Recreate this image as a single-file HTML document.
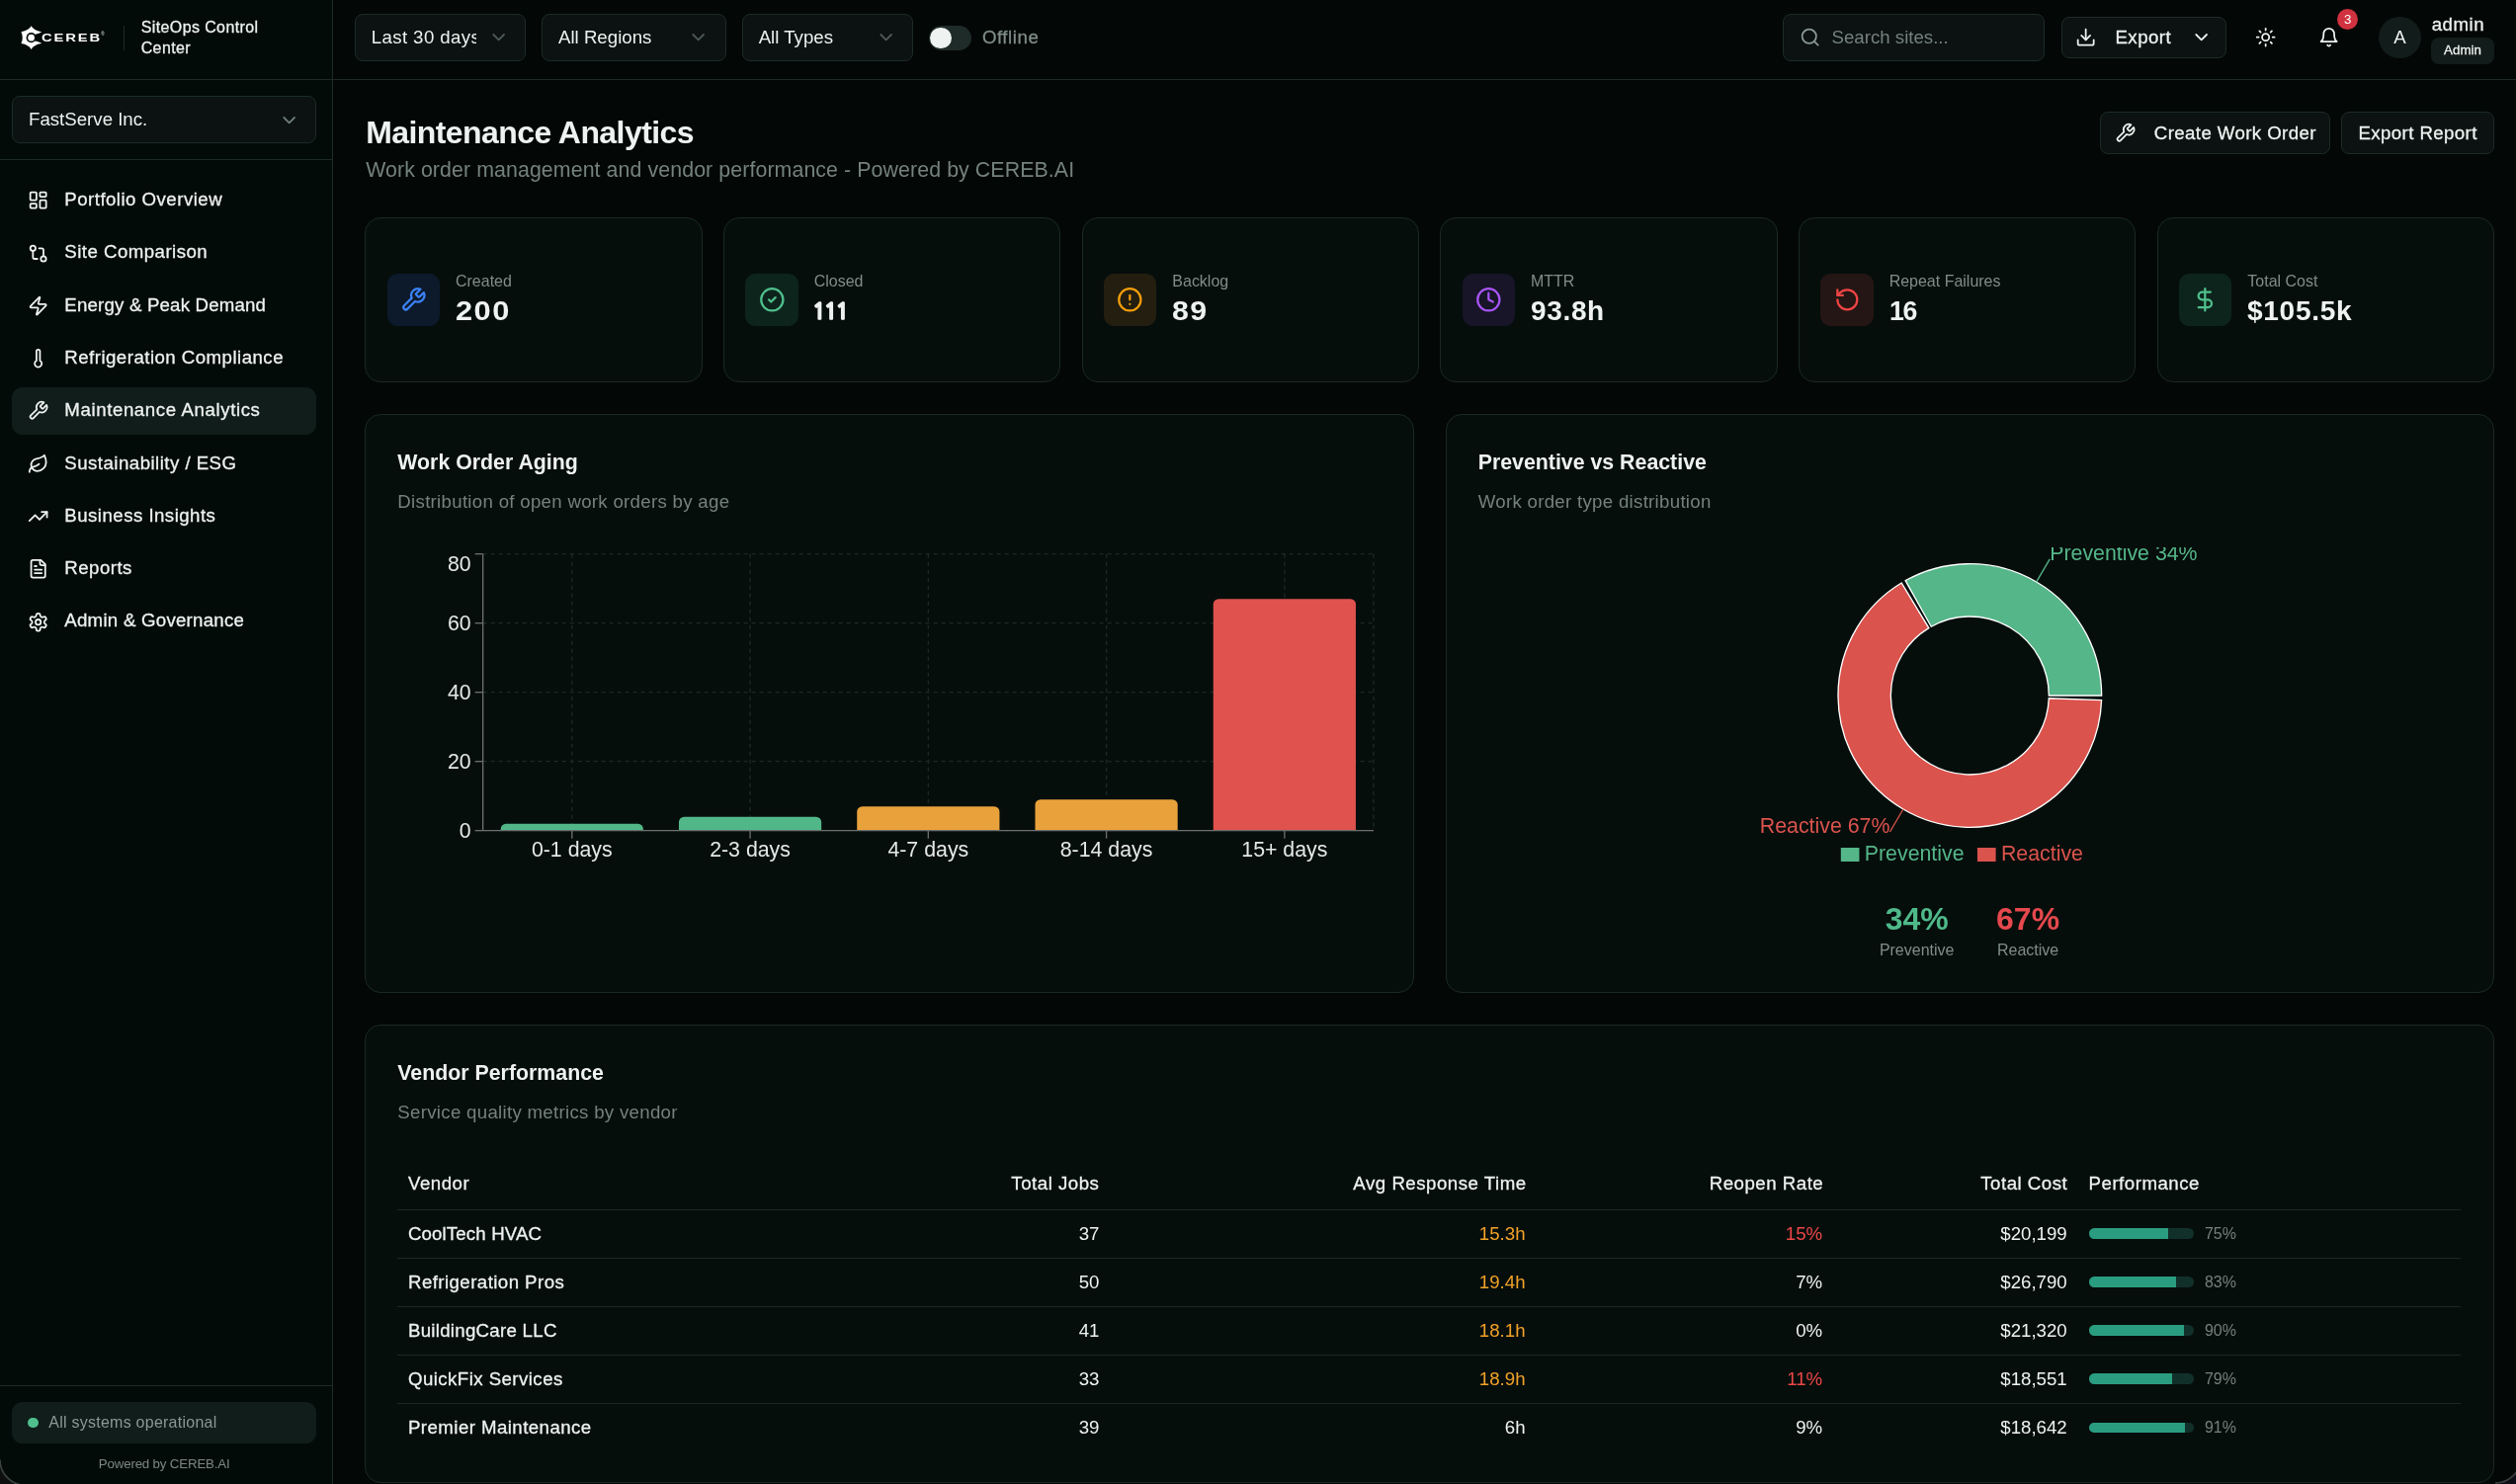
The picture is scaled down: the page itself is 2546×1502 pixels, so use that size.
<!DOCTYPE html>
<html lang="en">
<head>
<meta charset="utf-8">
<title>SiteOps Control Center - Maintenance Analytics</title>
<style>
*{box-sizing:border-box;margin:0;padding:0}
html,body{width:2546px;height:1502px;overflow:hidden;background:#030706}
body{font-family:"Liberation Sans",sans-serif;color:#eef2f0;-webkit-font-smoothing:antialiased}
#zoom{zoom:1.3333333;position:absolute;left:0;top:0;will-change:transform}
#app{position:absolute;left:-3px;top:-3px;width:1920px;height:1134px;background:#030706;font-size:14px}
svg.ic{fill:none;stroke:currentColor;stroke-width:2;stroke-linecap:round;stroke-linejoin:round;display:block;flex:none}
/* sidebar */
.sidebar{position:absolute;left:0;top:0;width:256px;height:1134px;background:#030b09;border-right:1px solid #1d2b28}
.brand{height:64px;border-bottom:1px solid #1d2b28;position:relative}
.brand .vline{position:absolute;left:96.5px;top:22.7px;width:1px;height:18.5px;background:#1d2b28}
.brand .appname{position:absolute;left:110px;top:15.5px;font-size:12px;line-height:16px;font-weight:500;color:#eef2f0;width:120px;letter-spacing:.3px}
.org{height:60.5px;border-bottom:1px solid #1d2b28;padding:12px}
.sel{height:36px;border:1px solid #1d2b28;border-radius:6px;background:#0b1211;display:flex;align-items:center;justify-content:space-between;padding:0 12px;font-size:14px;color:#eef2f0;white-space:nowrap}
.sel svg{width:16px;height:16px;color:#6f7d79}
.nav{padding:12.7px 12px 12px}
.nav a{display:flex;align-items:center;gap:12px;height:36px;padding:0 12px 1.4px;border-radius:8px;font-size:14px;font-weight:500;color:#eef2f0;margin-bottom:4px;text-decoration:none;white-space:nowrap;letter-spacing:.35px}
.nav a.on{background:#101d1a}
.nav a svg{width:16px;height:16px;position:relative;top:.7px}
.sfoot{position:absolute;left:0;right:0;bottom:0;height:79.6px;border-top:1px solid #1d2b28;padding:11.8px 12px 12px}
.status{height:32px;border-radius:8px;background:#101d1a;display:flex;align-items:center;gap:8px;padding:0 12px;font-size:12px;color:#8b9894;letter-spacing:.19px}
.status i{width:8px;height:8px;border-radius:50%;background:#4fc08d;display:block}
.pw{margin-top:7.8px;text-align:center;font-size:10px;line-height:15px;color:#7b8784;letter-spacing:-.14px}
/* topbar */
.topbar{position:absolute;left:256px;top:0;right:0;height:64px;border-bottom:1px solid #1d2b28;background:#030706}
.topbar .abs{position:absolute}
.tsel{position:absolute;top:13.5px}
.switch{position:absolute;left:452px;top:22.5px;width:32px;height:18.4px;border-radius:10px;background:#1f2b29}
.switch i{position:absolute;left:1px;top:1.2px;width:16px;height:16px;border-radius:50%;background:#eef2f0;display:block}
.offl{position:absolute;left:492.4px;top:22px;font-size:14px;line-height:20px;color:#7f8c88;font-weight:500;letter-spacing:.42px}
.search{position:absolute;left:1099.9px;top:13.5px;width:199px;height:36px;border:1px solid #1d2b28;border-radius:6px;background:#0b1211;display:flex;align-items:center;padding-left:12px;color:#74817d;font-size:14px}
.search svg{width:16px;height:16px;margin-right:8.5px;color:#8b9894}
.btn{position:absolute;height:32px;border:1px solid #1d2b28;border-radius:6px;background:#0b1211;display:flex;align-items:center;font-size:14px;font-weight:500;color:#eef2f0;white-space:nowrap;letter-spacing:.3px}
.btn svg{width:16px;height:16px}
.ibtn{position:absolute;top:13.5px;width:36px;height:36px;display:flex;align-items:center;justify-content:center;color:#eef2f0}
.ibtn svg{width:16px;height:16px}
.badge3{position:absolute;left:24.3px;top:-3.7px;width:16px;height:16px;border-radius:50%;background:#d1323f;color:#fff;font-size:10px;line-height:16px;text-align:center}
.avatar{position:absolute;left:1552.4px;top:15.5px;width:32px;height:32px;border-radius:50%;background:#121c1a;display:flex;align-items:center;justify-content:center;font-size:14px;color:#eef2f0}
.uname{position:absolute;left:1592.5px;top:12.1px;font-size:14px;line-height:20px;font-weight:500;color:#eef2f0;letter-spacing:.4px}
.urole{position:absolute;left:1592px;top:31.6px;height:20.5px;width:48px;border-radius:6px;background:#121c1a;font-size:10px;line-height:20px;text-align:center;color:#eef2f0;font-weight:500}
/* main */
.main{position:absolute;left:256px;top:64px;right:0;bottom:0;padding:24px}
h1{font-size:24px;line-height:32px;font-weight:700;color:#eef2f0;white-space:nowrap;letter-spacing:-.42px}
.sub{font-size:16px;line-height:24px;color:#74817d;white-space:nowrap;letter-spacing:.07px}
.card{position:absolute;border:1px solid #1a2925;border-radius:12px;background:#060e0c}
.kpi .ibox{position:absolute;left:16px;top:41.9px;width:40px;height:39.9px;border-radius:8px;display:flex;align-items:center;justify-content:center}
.kpi .ibox svg{width:20px;height:20px}
.kpi .lb{position:absolute;left:68px;top:39.5px;font-size:12px;line-height:16px;color:#808d89;white-space:nowrap}
.kpi .vl{position:absolute;left:68px;top:56.4px;font-size:21px;line-height:28px;font-weight:700;color:#eef2f0;white-space:nowrap}
.ct{position:absolute;left:24px;top:24px;font-size:16px;line-height:24px;font-weight:700;color:#eef2f0;white-space:nowrap}
.cd{position:absolute;left:24px;top:56.3px;font-size:14px;line-height:20px;color:#74817d;white-space:nowrap;letter-spacing:.22px}
table{position:absolute;left:24px;top:99.6px;border-collapse:collapse;table-layout:fixed;width:1566px;font-size:14px}
th{height:40px;font-weight:500;color:#eef2f0;text-align:right;padding:1.3px 8px 0;white-space:nowrap;letter-spacing:.38px}
td{height:36.75px;text-align:right;padding:0 8px;border-top:1px solid #1a2925;color:#eef2f0;white-space:nowrap}
th.l,td.l{text-align:left}
td.v{font-weight:500;letter-spacing:.33px}
.or{color:#f2a228}.rd{color:#ec4747}
td:nth-child(3),td:nth-child(4){padding-right:8.8px}td:nth-child(5){padding-right:8.4px}
.pb{display:flex;align-items:center;gap:8px}
.pb .tr{width:80px;height:8px;border-radius:4px;background:#12302a;overflow:hidden}
.pb .tr i{display:block;height:8px;background:#2a9d80}
.pb span{font-size:12px;color:#74817d}
.nav a,.btn,.uname,.urole,.offl,th,td.v,.brand .appname{-webkit-text-stroke:.22px currentColor}
</style>
</head>
<body>
<div id="zoom"><div id="app">
<aside class="sidebar">
  <div class="brand">
    <svg style="position:absolute;left:17px;top:21px;overflow:visible" width="68" height="21" viewBox="0 0 90.667 28">
      <g transform="translate(12.6,14.15) scale(0.955)">
        <path fill="#fff" d="M0,-12.4 Q2.6,-7.6 10.6,-6.2 L10.6,-5.6 L5,-2.6 L5,2.6 L10.6,5.6 L10.6,6.2 Q2.6,7.6 0,12.4 Q-2.6,7.6 -10.7,6.2 Q-7.8,0 -10.7,-6.2 Q-2.6,-7.6 0,-12.4Z"/>
        <circle r="5.3" fill="#030b09"/>
        <path fill="#030b09" d="M3.5,-3.2 L10.8,-5.4 L10.8,5.4 L3.5,3.2Z"/>
        <circle r="3.5" fill="#fff"/>
      </g>
      <text transform="translate(22.9,18.2) scale(1.3,1)" font-family="Liberation Sans, sans-serif" font-weight="700" font-size="11.4" fill="#fff" letter-spacing="1.45">CEREB</text>
      <text x="83.4" y="12" font-family="Liberation Sans, sans-serif" font-size="4.6" font-weight="700" fill="#c8c8c8">®</text>
    </svg>
    <div class="vline"></div>
    <div class="appname">SiteOps Control Center</div>
  </div>
  <div class="org"><div class="sel"><span>FastServe Inc.</span><svg class="ic" viewBox="0 0 24 24"><path d="m6 9 6 6 6-6"/></svg></div></div>
  <nav class="nav">
    <a><svg class="ic" viewBox="0 0 24 24"><rect x="3" y="3" width="7" height="9" rx="1"/><rect x="14" y="3" width="7" height="5" rx="1"/><rect x="14" y="12" width="7" height="9" rx="1"/><rect x="3" y="16" width="7" height="5" rx="1"/></svg>Portfolio Overview</a>
    <a><svg class="ic" viewBox="0 0 24 24"><circle cx="18" cy="18" r="3"/><circle cx="6" cy="6" r="3"/><path d="M13 6h3a2 2 0 0 1 2 2v7"/><path d="M11 18H8a2 2 0 0 1-2-2V9"/></svg>Site Comparison</a>
    <a style="letter-spacing:.14px"><svg class="ic" viewBox="0 0 24 24"><path d="M4 14a1 1 0 0 1-.78-1.63l9.9-10.2a.5.5 0 0 1 .86.46l-1.92 6.02A1 1 0 0 0 13 10h7a1 1 0 0 1 .78 1.63l-9.9 10.2a.5.5 0 0 1-.86-.46l1.92-6.02A1 1 0 0 0 11 14z"/></svg>Energy &amp; Peak Demand</a>
    <a><svg class="ic" viewBox="0 0 24 24"><path d="M14 4v10.54a4 4 0 1 1-4 0V4a2 2 0 0 1 4 0Z"/></svg>Refrigeration Compliance</a>
    <a class="on" style="letter-spacing:.45px"><svg class="ic" viewBox="0 0 24 24"><path d="M14.7 6.3a1 1 0 0 0 0 1.4l1.6 1.6a1 1 0 0 0 1.4 0l3.77-3.77a6 6 0 0 1-7.94 7.94l-6.91 6.91a2.12 2.12 0 0 1-3-3l6.91-6.91a6 6 0 0 1 7.94-7.94l-3.76 3.76z"/></svg>Maintenance Analytics</a>
    <a><svg class="ic" viewBox="0 0 24 24"><path d="M11 20A7 7 0 0 1 9.8 6.1C15.5 5 17 4.48 19 2c1 2 2 4.18 2 8 0 5.5-4.78 10-10 10Z"/><path d="M2 21c0-3 1.85-5.36 5.08-6C9.5 14.52 12 13 13 12"/></svg>Sustainability / ESG</a>
    <a><svg class="ic" viewBox="0 0 24 24"><polyline points="22 7 13.5 15.5 8.5 10.5 2 17"/><polyline points="16 7 22 7 22 13"/></svg>Business Insights</a>
    <a><svg class="ic" viewBox="0 0 24 24"><path d="M15 2H6a2 2 0 0 0-2 2v16a2 2 0 0 0 2 2h12a2 2 0 0 0 2-2V7Z"/><path d="M14 2v4a2 2 0 0 0 2 2h4"/><path d="M10 9H8"/><path d="M16 13H8"/><path d="M16 17H8"/></svg>Reports</a>
    <a style="letter-spacing:.19px"><svg class="ic" viewBox="0 0 24 24"><path d="M12.22 2h-.44a2 2 0 0 0-2 2v.18a2 2 0 0 1-1 1.73l-.43.25a2 2 0 0 1-2 0l-.15-.08a2 2 0 0 0-2.73.73l-.22.38a2 2 0 0 0 .73 2.73l.15.1a2 2 0 0 1 1 1.72v.51a2 2 0 0 1-1 1.74l-.15.09a2 2 0 0 0-.73 2.73l.22.38a2 2 0 0 0 2.73.73l.15-.08a2 2 0 0 1 2 0l.43.25a2 2 0 0 1 1 1.73V20a2 2 0 0 0 2 2h.44a2 2 0 0 0 2-2v-.18a2 2 0 0 1 1-1.73l.43-.25a2 2 0 0 1 2 0l.15.08a2 2 0 0 0 2.73-.73l.22-.39a2 2 0 0 0-.73-2.73l-.15-.08a2 2 0 0 1-1-1.74v-.5a2 2 0 0 1 1-1.74l.15-.09a2 2 0 0 0 .73-2.73l-.22-.38a2 2 0 0 0-2.73-.73l-.15.08a2 2 0 0 1-2 0l-.43-.25a2 2 0 0 1-1-1.73V4a2 2 0 0 0-2-2z"/><circle cx="12" cy="12" r="3"/></svg>Admin &amp; Governance</a>
  </nav>
  <div class="sfoot">
    <div class="status"><i></i><span>All systems operational</span></div>
    <div class="pw">Powered by CEREB.AI</div>
  </div>
</aside>

<header class="topbar">
  <div class="sel tsel" style="left:16px;width:130px"><span style="overflow:hidden;width:80px;letter-spacing:.3px">Last 30 days</span><svg class="ic" viewBox="0 0 24 24" style="color:#4e5a57"><path d="m6 9 6 6 6-6"/></svg></div>
  <div class="sel tsel" style="left:158px;width:140px"><span>All Regions</span><svg class="ic" viewBox="0 0 24 24" style="color:#4e5a57"><path d="m6 9 6 6 6-6"/></svg></div>
  <div class="sel tsel" style="left:310px;width:130px"><span>All Types</span><svg class="ic" viewBox="0 0 24 24" style="color:#4e5a57"><path d="m6 9 6 6 6-6"/></svg></div>
  <div class="switch"><i></i></div>
  <div class="offl">Offline</div>
  <div class="search"><svg class="ic" viewBox="0 0 24 24"><circle cx="11" cy="11" r="8"/><path d="m21 21-4.3-4.3"/></svg>Search sites...</div>
  <div class="btn" style="left:1311.6px;top:15.5px;width:125px;padding-left:10px;letter-spacing:.35px"><svg class="ic" viewBox="0 0 24 24"><path d="M21 15v4a2 2 0 0 1-2 2H5a2 2 0 0 1-2-2v-4"/><polyline points="7 10 12 15 17 10"/><line x1="12" y1="15" x2="12" y2="3"/></svg><span style="margin-left:14px">Export</span><svg class="ic" viewBox="0 0 24 24" style="position:absolute;right:10px;top:7px"><path d="m6 9 6 6 6-6"/></svg></div>
  <div class="ibtn" style="left:1448.5px"><svg class="ic" viewBox="0 0 24 24"><circle cx="12" cy="12" r="4"/><path d="M12 2v2"/><path d="M12 20v2"/><path d="m4.93 4.93 1.41 1.41"/><path d="m17.66 17.66 1.41 1.41"/><path d="M2 12h2"/><path d="M20 12h2"/><path d="m6.34 17.66-1.41 1.41"/><path d="m19.07 4.93-1.41 1.41"/></svg></div>
  <div class="ibtn" style="left:1496.5px"><svg class="ic" viewBox="0 0 24 24"><path d="M6 8a6 6 0 0 1 12 0c0 7 3 9 3 9H3s3-2 3-9"/><path d="M10.3 21a1.94 1.94 0 0 0 3.4 0"/></svg><span class="badge3">3</span></div>
  <div class="avatar">A</div>
  <div class="uname">admin</div>
  <div class="urole">Admin</div>
</header>

<main class="main">
<h1 style="position:absolute;left:24.6px;top:23.65px">Maintenance Analytics</h1>
<div class="sub" style="position:absolute;left:24.6px;top:55.65px">Work order management and vendor performance - Powered by CEREB.AI</div>
<div class="btn" style="left:1341.1px;top:24px;width:174.2px;padding-left:10px"><svg class="ic" viewBox="0 0 24 24"><path d="M14.7 6.3a1 1 0 0 0 0 1.4l1.6 1.6a1 1 0 0 0 1.4 0l3.77-3.77a6 6 0 0 1-7.94 7.94l-6.91 6.91a2.12 2.12 0 0 1-3-3l6.91-6.91a6 6 0 0 1 7.94-7.94l-3.76 3.76z"/></svg><span style="margin-left:14px">Create Work Order</span></div>
<div class="btn" style="left:1524px;top:24px;width:116px;justify-content:center">Export Report</div>
<div class="card kpi" style="left:24.00px;top:104px;width:256.00px;height:125.2px"><div class="ibox" style="background:#0d1a2b;color:#3b82f6"><svg class="ic" viewBox="0 0 24 24"><path d="M14.7 6.3a1 1 0 0 0 0 1.4l1.6 1.6a1 1 0 0 0 1.4 0l3.77-3.77a6 6 0 0 1-7.94 7.94l-6.91 6.91a2.12 2.12 0 0 1-3-3l6.91-6.91a6 6 0 0 1 7.94-7.94l-3.76 3.76z"/></svg></div><div class="lb">Created</div><div class="vl"><span style="display:inline-block;transform-origin:0 50%;transform:scaleX(1.1);letter-spacing:1.0px">200</span></div></div>
<div class="card kpi" style="left:296.00px;top:104px;width:256.00px;height:125.2px"><div class="ibox" style="background:#0d241c;color:#4fc08d"><svg class="ic" viewBox="0 0 24 24"><circle cx="12" cy="12" r="10"/><path d="m9 12 2 2 4-4"/></svg></div><div class="lb">Closed</div><div class="vl"><span style="display:inline-block;transform-origin:0 50%;transform:scaleX(1.0);letter-spacing:-1.85px;font-family:'NanumGothic','Liberation Sans',sans-serif;position:relative;left:-1.4px;top:-.6px;font-size:17.6px;-webkit-text-stroke:1px currentColor">111</span></div></div>
<div class="card kpi" style="left:568.00px;top:104px;width:256.00px;height:125.2px"><div class="ibox" style="background:#231e10;color:#f59e0b"><svg class="ic" viewBox="0 0 24 24"><circle cx="12" cy="12" r="10"/><line x1="12" y1="8" x2="12" y2="12"/><line x1="12" y1="16" x2="12.01" y2="16"/></svg></div><div class="lb">Backlog</div><div class="vl"><span style="display:inline-block;transform-origin:0 50%;transform:scaleX(1.085);letter-spacing:1.0px">89</span></div></div>
<div class="card kpi" style="left:840.00px;top:104px;width:256.00px;height:125.2px"><div class="ibox" style="background:#171527;color:#a855f7"><svg class="ic" viewBox="0 0 24 24"><circle cx="12" cy="12" r="10"/><polyline points="12 6 12 12 16 14"/></svg></div><div class="lb">MTTR</div><div class="vl"><span style="display:inline-block;transform-origin:0 50%;transform:scaleX(1.0);letter-spacing:0.5px">93.8h</span></div></div>
<div class="card kpi" style="left:1112.00px;top:104px;width:256.00px;height:125.2px"><div class="ibox" style="background:#241614;color:#ef4444"><svg class="ic" viewBox="0 0 24 24"><path d="M3 12a9 9 0 1 0 9-9 9.75 9.75 0 0 0-6.74 2.74L3 8"/><path d="M3 3v5h5"/></svg></div><div class="lb">Repeat Failures</div><div class="vl"><span style="display:inline-block;transform-origin:0 50%;transform:scaleX(0.953);letter-spacing:-1.0px">16</span></div></div>
<div class="card kpi" style="left:1384.00px;top:104px;width:256.00px;height:125.2px"><div class="ibox" style="background:#0d241c;color:#4fc08d"><svg class="ic" viewBox="0 0 24 24"><line x1="12" y1="2" x2="12" y2="22"/><path d="M17 5H9.5a3.5 3.5 0 0 0 0 7h5a3.5 3.5 0 0 1 0 7H6"/></svg></div><div class="lb">Total Cost</div><div class="vl"><span style="display:inline-block;transform-origin:0 50%;transform:scaleX(1.004);letter-spacing:0.5px">$105.5k</span></div></div>
<div class="card" style="left:24px;top:253px;width:796.00px;height:439.7px">
<div class="ct">Work Order Aging</div><div class="cd">Distribution of open work orders by age</div>
<svg style="position:absolute;left:24px;top:100.4px" width="746.00" height="250" viewBox="0 0 746.00 250" font-family="Liberation Sans, sans-serif" font-size="16">
<g stroke="#1b2a26" stroke-dasharray="3 3" fill="none"><line x1="65" y1="5.0" x2="741.00" y2="5.0"/><line x1="65" y1="57.5" x2="741.00" y2="57.5"/><line x1="65" y1="110.0" x2="741.00" y2="110.0"/><line x1="65" y1="162.5" x2="741.00" y2="162.5"/><line x1="65" y1="215.0" x2="741.00" y2="215.0"/><line x1="132.60" y1="5" x2="132.60" y2="215"/><line x1="267.80" y1="5" x2="267.80" y2="215"/><line x1="403.00" y1="5" x2="403.00" y2="215"/><line x1="538.20" y1="5" x2="538.20" y2="215"/><line x1="673.40" y1="5" x2="673.40" y2="215"/><line x1="741.00" y1="5" x2="741.00" y2="215"/></g>
<path fill="#52b788" d="M78.52,215V213.75a4,4 0 0 1 4,-4h100.16a4,4 0 0 1 4,4V215Z"/>
<path fill="#52b788" d="M213.72,215V208.50a4,4 0 0 1 4,-4h100.16a4,4 0 0 1 4,4V215Z"/>
<path fill="#e9a23b" d="M348.92,215V200.62a4,4 0 0 1 4,-4h100.16a4,4 0 0 1 4,4V215Z"/>
<path fill="#e9a23b" d="M484.12,215V195.38a4,4 0 0 1 4,-4h100.16a4,4 0 0 1 4,4V215Z"/>
<path fill="#e0524d" d="M619.32,215V43.12a4,4 0 0 1 4,-4h100.16a4,4 0 0 1 4,4V215Z"/>
<g stroke="#6b6f6e" fill="none"><line x1="65" y1="5" x2="65" y2="215"/><line x1="65" y1="215" x2="741.00" y2="215"/><line x1="59" y1="5.0" x2="65" y2="5.0"/><line x1="132.60" y1="215" x2="132.60" y2="221"/><line x1="59" y1="57.5" x2="65" y2="57.5"/><line x1="267.80" y1="215" x2="267.80" y2="221"/><line x1="59" y1="110.0" x2="65" y2="110.0"/><line x1="403.00" y1="215" x2="403.00" y2="221"/><line x1="59" y1="162.5" x2="65" y2="162.5"/><line x1="538.20" y1="215" x2="538.20" y2="221"/><line x1="59" y1="215.0" x2="65" y2="215.0"/><line x1="673.40" y1="215" x2="673.40" y2="221"/></g>
<g fill="#e4e9e7" text-anchor="end">
<text x="56" y="18.20">80</text>
<text x="56" y="63.20">60</text>
<text x="56" y="115.70">40</text>
<text x="56" y="168.20">20</text>
<text x="56" y="220.70">0</text>
</g><g fill="#e4e9e7" text-anchor="middle">
<text x="132.60" y="234.40">0-1 days</text>
<text x="267.80" y="234.40">2-3 days</text>
<text x="403.00" y="234.40">4-7 days</text>
<text x="538.20" y="234.40">8-14 days</text>
<text x="673.40" y="234.40">15+ days</text>
</g></svg></div>
<div class="card" style="left:844.00px;top:253px;width:796.00px;height:439.7px">
<div class="ct">Preventive vs Reactive</div><div class="cd">Work order type distribution</div>
<svg style="position:absolute;left:24px;top:100.7px;overflow:hidden" width="746.00" height="250" viewBox="0 0 746.00 250" font-family="Liberation Sans, sans-serif" font-size="16">
<path fill="#55b689" stroke="#fff" stroke-width="1" d="M473.00,112.50A100,100 0 0 0 324.12,25.26L343.67,60.16A60,60 0 0 1 433.00,112.50Z"/>
<path fill="#db534d" stroke="#fff" stroke-width="1" d="M321.11,27.02A100,100 0 1 0 472.94,115.99L432.96,114.59A60,60 0 1 1 341.86,61.21Z"/>
<line x1="423.56" y1="26.22" x2="433.67" y2="8.97" stroke="#55b689" fill="none"/>
<text x="433.67" y="9.97" text-anchor="start" fill="#55b689">Preventive 34%</text>
<line x1="322.44" y1="198.78" x2="312.33" y2="216.03" stroke="#db534d" fill="none"/>
<text x="312.33" y="217.03" text-anchor="end" fill="#db534d">Reactive 67%</text>
<rect x="275.10" y="228.00" width="14" height="10.5" fill="#55b689"/><text x="293.10" y="237.90" fill="#55b689">Preventive</text>
<rect x="378.70" y="228.00" width="14" height="10.5" fill="#db534d"/><text x="396.70" y="237.90" fill="#db534d">Reactive</text>
</svg>
<div style="position:absolute;left:24px;top:366.7px;width:746.00px;display:flex;justify-content:center;gap:32px;text-align:center"><div><div style="font-size:24px;line-height:32px;font-weight:700;color:#4fb98a">34%</div><div style="font-size:12px;line-height:16px;color:#808d89">Preventive</div></div><div><div style="font-size:24px;line-height:32px;font-weight:700;color:#e5484d">67%</div><div style="font-size:12px;line-height:16px;color:#808d89">Reactive</div></div></div>
</div>
<div class="card" style="left:24px;top:716.9px;width:1616px;height:348.2px">
<div class="ct">Vendor Performance</div><div class="cd">Service quality metrics by vendor</div>
<table><colgroup><col style="width:401.1px"><col style="width:139.3px"><col style="width:324px"><col style="width:225.4px"><col style="width:185.2px"><col style="width:290.4px"></colgroup>
<tr><th class="l">Vendor</th><th>Total Jobs</th><th>Avg Response Time</th><th>Reopen Rate</th><th>Total Cost</th><th class="l">Performance</th></tr>
<tr><td class="l v" style="letter-spacing:.1px">CoolTech HVAC</td><td>37</td><td class="or">15.3h</td><td class="rd">15%</td><td>$20,199</td><td class="l"><div class="pb"><div class="tr"><i style="width:75%"></i></div><span>75%</span></div></td></tr>
<tr><td class="l v">Refrigeration Pros</td><td>50</td><td class="or">19.4h</td><td class="">7%</td><td>$26,790</td><td class="l"><div class="pb"><div class="tr"><i style="width:83%"></i></div><span>83%</span></div></td></tr>
<tr><td class="l v" style="letter-spacing:.21px">BuildingCare LLC</td><td>41</td><td class="or">18.1h</td><td class="">0%</td><td>$21,320</td><td class="l"><div class="pb"><div class="tr"><i style="width:90%"></i></div><span>90%</span></div></td></tr>
<tr><td class="l v">QuickFix Services</td><td>33</td><td class="or">18.9h</td><td class="rd">11%</td><td>$18,551</td><td class="l"><div class="pb"><div class="tr"><i style="width:79%"></i></div><span>79%</span></div></td></tr>
<tr><td class="l v">Premier Maintenance</td><td>39</td><td class="">6h</td><td class="">9%</td><td>$18,642</td><td class="l"><div class="pb"><div class="tr"><i style="width:91%"></i></div><span>91%</span></div></td></tr>
</table></div>
</main>
</div></div>
<svg style="position:absolute;left:0;top:0;pointer-events:none" width="2546" height="1502" viewBox="0 0 2546 1502">
<path d="M-1,1477.3A26,26 0 0 0 25.9,1503.3L-1,1503.3Z" fill="#0f0f10"/><path d="M-0.1,1477.3A26,26 0 0 0 25.9,1503.3" fill="none" stroke="#3a4440" stroke-width="1.6"/>
<path d="M2551,1475A26,26 0 0 1 2525,1501L2525,1504L2551,1504Z" fill="#0e0d15"/><path d="M2551,1475A26,26 0 0 1 2525,1501" fill="none" stroke="#3c3f3e" stroke-width="1.6"/>
</svg>
</body>
</html>
